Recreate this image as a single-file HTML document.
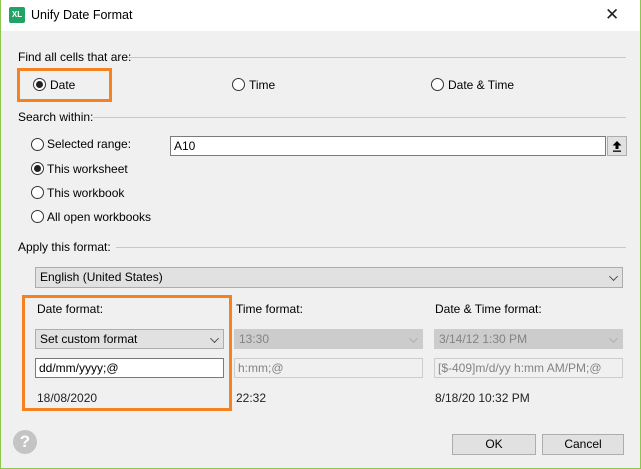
<!DOCTYPE html>
<html><head><meta charset="utf-8"><style>
*{box-sizing:border-box;margin:0;padding:0}
body{width:641px;height:469px;overflow:hidden;background:#f0f0f0;font-family:"Liberation Sans",sans-serif;font-size:12px;color:#000;position:relative}
.a{position:absolute;white-space:nowrap}
.frame{position:absolute;left:0;top:0;width:641px;height:469px;border:1px solid #8cc84b;border-top:none;pointer-events:none}
.title{position:absolute;left:0;top:0;width:641px;height:31px;background:#fff}
.line{position:absolute;height:1px;background:#c8c8c8}
.rad{position:absolute;width:13px;height:13px;border:1px solid #333;border-radius:50%;background:#fff}
.rad.on::after{content:"";position:absolute;left:2px;top:2px;width:7px;height:7px;border-radius:50%;background:#222}
.box{position:absolute;border:1px solid #7a7a7a;background:#fff;padding-left:3px;line-height:18px}
.sel{position:absolute;border:1px solid #adadad;background:#e1e1e1;padding-left:4px;line-height:18px}
.dsel{position:absolute;border:1px solid #ccc;background:#ccc;color:#838383;padding-left:4px;line-height:18px}
.din{position:absolute;border:1px solid #ccc;background:#f0f0f0;color:#838383;padding-left:3px;line-height:18px}
.chev{position:absolute;right:5px;top:5px;width:7px;height:7px;border-right:1px solid #444;border-bottom:1px solid #444;transform:rotate(45deg) scale(.9)}
.btn{position:absolute;border:1px solid #adadad;background:#e1e1e1;text-align:center;line-height:19px}
.org{position:absolute;border:3px solid #f58220}
</style></head><body>
<div class="title"></div>
<div class="a" style="left:9px;top:7px;width:16px;height:16px;background:#21a366;border-radius:2px;color:#fff;font-size:8px;font-weight:bold;line-height:16px;text-align:center">XL</div>
<div class="a" style="left:31px;top:8px;font-size:12.5px">Unify Date Format</div>
<div class="a" style="left:605px;top:5px;font-size:17px;color:#222">✕</div>

<div class="a" style="left:18px;top:50px">Find all cells that are:</div>
<div class="line" style="left:128px;top:57px;width:498px"></div>
<div class="org" style="left:17px;top:68px;width:95px;height:34px"></div>
<div class="rad on" style="left:33px;top:78px"></div><div class="a" style="left:50px;top:78px">Date</div>
<div class="rad" style="left:232px;top:78px"></div><div class="a" style="left:249px;top:78px">Time</div>
<div class="rad" style="left:431px;top:78px"></div><div class="a" style="left:448px;top:78px">Date &amp; Time</div>

<div class="a" style="left:18px;top:110px">Search within:</div>
<div class="line" style="left:93px;top:117px;width:533px"></div>
<div class="rad" style="left:31px;top:138px"></div><div class="a" style="left:47px;top:137px">Selected range:</div>
<div class="box" style="left:170px;top:136px;width:436px;height:20px">A10</div>
<div class="a" style="left:607px;top:136px;width:20px;height:20px;border:1px solid #adadad;background:#e1e1e1"><svg width="18" height="18" viewBox="0 0 18 18" style="position:absolute;left:0;top:0"><path d="M9 4 L4.5 8.5 H7.5 V12 H10.5 V8.5 H13.5 Z" fill="#000"/><rect x="5" y="13.5" width="8" height="1.3" fill="#000"/></svg></div>
<div class="rad on" style="left:31px;top:162px"></div><div class="a" style="left:47px;top:162px">This worksheet</div>
<div class="rad" style="left:31px;top:186px"></div><div class="a" style="left:47px;top:186px">This workbook</div>
<div class="rad" style="left:31px;top:210px"></div><div class="a" style="left:47px;top:210px">All open workbooks</div>

<div class="a" style="left:18px;top:240px">Apply this format:</div>
<div class="line" style="left:116px;top:247px;width:510px"></div>
<div class="sel" style="left:35px;top:267px;width:588px;height:21px">English (United States)<span class="chev"></span></div>

<div class="org" style="left:22px;top:295px;width:210px;height:116px"></div>
<div class="a" style="left:37px;top:302px">Date format:</div>
<div class="a" style="left:236px;top:302px">Time format:</div>
<div class="a" style="left:435px;top:302px">Date &amp; Time format:</div>
<div class="sel" style="left:35px;top:329px;width:189px;height:20px">Set custom format<span class="chev"></span></div>
<div class="dsel" style="left:234px;top:329px;width:189px;height:20px">13:30<span class="chev" style="border-color:#aaa"></span></div>
<div class="dsel" style="left:434px;top:329px;width:189px;height:20px">3/14/12 1:30 PM<span class="chev" style="border-color:#aaa"></span></div>
<div class="box" style="left:35px;top:358px;width:189px;height:20px">dd/mm/yyyy;@</div>
<div class="din" style="left:234px;top:358px;width:189px;height:20px">h:mm;@</div>
<div class="din" style="left:434px;top:358px;width:189px;height:20px">[$-409]m/d/yy h:mm AM/PM;@</div>
<div class="a" style="left:37px;top:391px;color:#222">18/08/2020</div>
<div class="a" style="left:236px;top:391px;color:#222">22:32</div>
<div class="a" style="left:435px;top:391px;color:#222">8/18/20 10:32 PM</div>

<div class="a" style="left:13px;top:430px;width:24px;height:24px;border-radius:50%;background:#c4c4c4;color:#fff;font-weight:bold;font-size:17px;text-align:center;line-height:24px">?</div>
<div class="btn" style="left:452px;top:434px;width:84px;height:21px">OK</div>
<div class="btn" style="left:542px;top:434px;width:82px;height:21px">Cancel</div>
<div class="frame"></div>
</body></html>
